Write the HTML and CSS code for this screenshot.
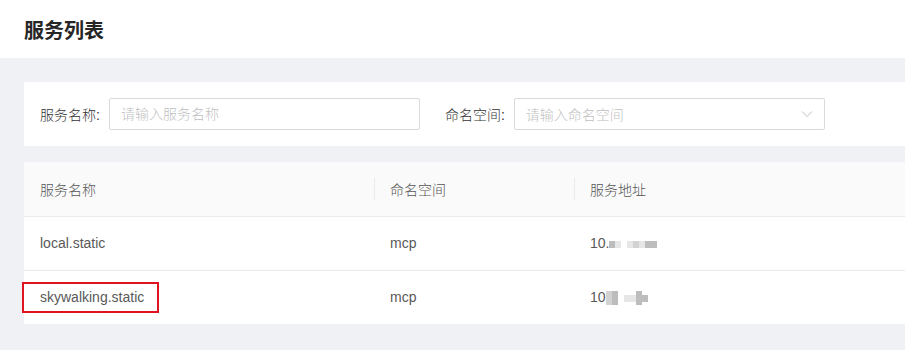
FILE: index.html
```html
<!DOCTYPE html>
<html lang="zh-CN">
<head>
    <meta charset="UTF-8">
    <title>服务列表</title>
    <link rel="stylesheet" href="styles.css">
</head>
<body>

<div class="page-header">
    <h2>服务列表</h2>
</div>

<div class="content">
    <div class="filter-card">
        <div class="field">
            <label>服务名称:</label>
            <input type="text" class="text-input" placeholder="请输入服务名称">
        </div>
        <div class="field">
            <label>命名空间:</label>
            <div class="select-box">
                <span class="placeholder">请输入命名空间</span>
                <svg class="arrow" width="12" height="8" viewBox="0 0 12 8">
                    <polyline points="1,1.5 6,6.5 11,1.5" fill="none" stroke="#bfbfbf" stroke-width="1"/>
                </svg>
            </div>
        </div>
    </div>

    <div class="table-card">
        <table>
            <thead>
                <tr>
                    <th class="col-name">服务名称</th>
                    <th class="col-ns">命名空间</th>
                    <th>服务地址</th>
                </tr>
            </thead>
            <tbody>
                <tr>
                    <td>local.static</td>
                    <td>mcp</td>
                    <td>
                        <span class="addr">10.</span><span class="mosaic">
                            <i class="m1"></i><i class="m3"></i><i class="gap"></i><i class="m3"></i><i class="m2"></i><i class="m3"></i><i class="m1"></i><i class="m1"></i>
                        </span>
                    </td>
                </tr>
                <tr>
                    <td><span class="highlight">skywalking.static</span></td>
                    <td>mcp</td>
                    <td>
                        <span class="addr">10</span><span class="mosaic low">
                            <i class="m2 tall"></i><i class="m1 tall"></i><i class="gap"></i><i class="m3"></i><i class="m3"></i><i class="m1 tall"></i><i class="m1"></i>
                        </span>
                    </td>
                </tr>
            </tbody>
        </table>
    </div>
</div>

</body>
</html>
```

FILE: styles.css
```css
body {
    margin: 0;
    padding: 0;
    font-family: "Liberation Sans", "Noto Sans CJK SC", sans-serif;
    font-size: 14px;
    font-weight: 300;
    color: #333;
    background-color: #f0f1f5;
}

.page-header {
    background: #fff;
    height: 58px;
    padding: 0 24px;
    display: flex;
    align-items: center;
}

.page-header h2 {
    margin: 0;
    font-size: 20px;
    font-weight: 700;
    color: #262626;
}

.content {
    padding: 24px 0 0 24px;
}

.filter-card {
    background: #fff;
    height: 64px;
    padding: 0 16px;
    display: flex;
    align-items: center;
    gap: 25px;
}

.field {
    display: flex;
    align-items: center;
}

.field label {
    color: #333;
    margin-right: 9px;
}

.text-input,
.select-box {
    box-sizing: border-box;
    width: 311px;
    height: 32px;
    border: 1px solid #d9d9d9;
    border-radius: 2px;
    padding: 0 11px;
    font-family: inherit;
    font-size: 14px;
    font-weight: 300;
    outline: none;
}

.text-input::placeholder {
    color: #bfbfbf;
}

.select-box {
    display: flex;
    align-items: center;
    justify-content: space-between;
}

.select-box .placeholder {
    color: #bfbfbf;
}

.table-card {
    margin-top: 16px;
    background: #fff;
}

table {
    width: 100%;
    border-collapse: collapse;
}

th, td {
    height: 54px;
    padding: 0 16px;
    text-align: left;
    font-weight: 300;
    box-sizing: border-box;
}

th {
    background: #fafafa;
    color: #555;
    border-bottom: 1px solid #ebebeb;
    position: relative;
}

td {
    color: #595959;
}

tbody tr:first-child td {
    border-bottom: 1px solid #ebebeb;
}

.col-name {
    width: 350px;
}

.col-ns {
    width: 200px;
}

.col-ns::before,
.col-ns + th::before {
    content: "";
    position: absolute;
    left: 0;
    top: 50%;
    height: 22px;
    margin-top: -11px;
    border-left: 1px solid #ebebeb;
}

.highlight {
    position: relative;
    display: inline-block;
    line-height: 20px;
}

.highlight::after {
    content: "";
    position: absolute;
    left: -18px;
    right: -15px;
    top: -5px;
    bottom: -6px;
    border: 2px solid #e0141e;
}

.addr {
    color: #595959;
}

.mosaic {
    display: inline-flex;
    align-items: flex-start;
    vertical-align: middle;
}

.mosaic i {
    display: block;
    width: 6px;
    height: 7px;
}

.mosaic .gap {
    width: 6px;
    background: transparent;
}

.mosaic .m1 { background: #bdbdbd; }
.mosaic .m2 { background: #d2d2d2; }
.mosaic .m3 { background: #e6e6e6; }

.mosaic .tall {
    height: 14px;
}

.mosaic.low i:not(.tall) {
    margin-top: 4px;
}
```
